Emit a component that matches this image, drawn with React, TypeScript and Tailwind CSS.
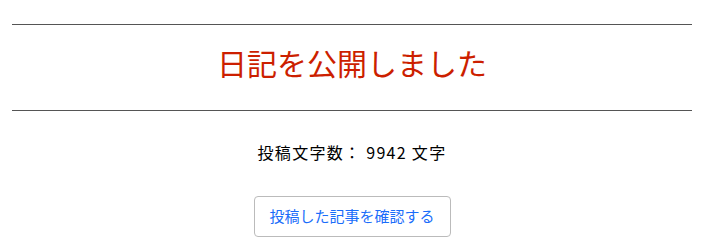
export default function App() {
  return (
    <div
      className="w-full bg-white pl-3 pr-[14px] pt-6"
      style={{ fontFamily: '"Noto Sans CJK JP", "Noto Sans", sans-serif' }}
    >
      <hr className="border-t border-[#555555]" />
      <div className="flex h-[85px] items-center justify-center pb-3">
        <h1 className="text-[30px] font-normal leading-none text-[#cc1f00]">日記を公開しました</h1>
      </div>
      <hr className="border-t border-[#555555]" />

      <div className="mt-[29px] text-center text-[16px] leading-6 tracking-[1.3px] text-black">
        投稿文字数： 9942 文字
      </div>

      <div className="mt-[32px] flex justify-center">
        <button className="h-[41px] w-[197px] rounded border border-[#bbbbbb] bg-white text-[15px] text-[#1a6dfa]">
          投稿した記事を確認する
        </button>
      </div>
    </div>
  );
}
